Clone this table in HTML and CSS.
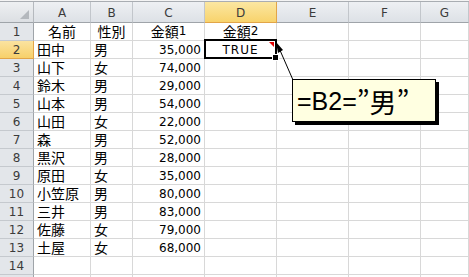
FILE: index.html
```html
<!DOCTYPE html>
<html lang="ja">
<head>
<meta charset="utf-8">
<link rel="stylesheet" href="styles.css">
</head>
<body>
<div class="wrap">
  <div class="sheet">
    <div class="corner"><span class="tri"></span></div>
    <div class="ch">A</div><div class="ch">B</div><div class="ch">C</div><div class="ch sel">D</div><div class="ch">E</div><div class="ch">F</div><div class="ch">G</div>

    <div class="rh">1</div><div class="c ctr j">名前</div><div class="c ctr j">性別</div><div class="c ctr j">金額<span class="n">1</span></div><div class="c ctr j">金額<span class="n">2</span></div><div class="c"></div><div class="c"></div><div class="c"></div>

    <div class="rh sel">2</div><div class="c j">田中</div><div class="c j">男</div><div class="c num">35,000</div><div class="c ctr n tr">TRUE</div><div class="c"></div><div class="c"></div><div class="c"></div>

    <div class="rh">3</div><div class="c j">山下</div><div class="c j">女</div><div class="c num">74,000</div><div class="c"></div><div class="c"></div><div class="c"></div><div class="c"></div>
    <div class="rh">4</div><div class="c j">鈴木</div><div class="c j">男</div><div class="c num">29,000</div><div class="c"></div><div class="c"></div><div class="c"></div><div class="c"></div>
    <div class="rh">5</div><div class="c j">山本</div><div class="c j">男</div><div class="c num">54,000</div><div class="c"></div><div class="c"></div><div class="c"></div><div class="c"></div>
    <div class="rh">6</div><div class="c j">山田</div><div class="c j">女</div><div class="c num">22,000</div><div class="c"></div><div class="c"></div><div class="c"></div><div class="c"></div>
    <div class="rh">7</div><div class="c j">森</div><div class="c j">男</div><div class="c num">52,000</div><div class="c"></div><div class="c"></div><div class="c"></div><div class="c"></div>
    <div class="rh">8</div><div class="c j">黒沢</div><div class="c j">男</div><div class="c num">28,000</div><div class="c"></div><div class="c"></div><div class="c"></div><div class="c"></div>
    <div class="rh">9</div><div class="c j">原田</div><div class="c j">女</div><div class="c num">35,000</div><div class="c"></div><div class="c"></div><div class="c"></div><div class="c"></div>
    <div class="rh">10</div><div class="c j">小笠原</div><div class="c j">男</div><div class="c num">80,000</div><div class="c"></div><div class="c"></div><div class="c"></div><div class="c"></div>
    <div class="rh">11</div><div class="c j">三井</div><div class="c j">男</div><div class="c num">83,000</div><div class="c"></div><div class="c"></div><div class="c"></div><div class="c"></div>
    <div class="rh">12</div><div class="c j">佐藤</div><div class="c j">女</div><div class="c num">79,000</div><div class="c"></div><div class="c"></div><div class="c"></div><div class="c"></div>
    <div class="rh">13</div><div class="c j">土屋</div><div class="c j">女</div><div class="c num">68,000</div><div class="c"></div><div class="c"></div><div class="c"></div><div class="c"></div>
    <div class="rh">14</div><div class="c"></div><div class="c"></div><div class="c"></div><div class="c"></div><div class="c"></div><div class="c"></div><div class="c"></div>
    <div class="rh last"></div><div class="c"></div><div class="c"></div><div class="c"></div><div class="c"></div><div class="c"></div><div class="c"></div><div class="c"></div>
  </div>

  <div class="selbox"><span class="redtri"></span></div>
  <div class="handle"></div>

  <svg class="arrow" width="469" height="277" viewBox="0 0 469 277">
    <line x1="279" y1="48" x2="293" y2="80" stroke="#000" stroke-width="1"/>
    <polygon points="276,42 283,50 278,53" fill="#000"/>
  </svg>

  <div class="note"><span class="f">=B2=</span><span class="fj">”男”</span></div>
</div>
</body>
</html>
```

FILE: styles.css
```css
html, body {
  margin: 0;
  padding: 0;
  background: #fff;
  overflow: hidden;
}

.wrap {
  position: relative;
  width: 469px;
  height: 277px;
  overflow: hidden;
  padding-top: 1px;
  box-sizing: border-box;
  background: #f4f4f4;
}

.sheet {
  display: grid;
  grid-template-columns: 34px 57px 42px 72px 72px 72px 72px 48px;
  grid-template-rows: 21px repeat(14, 18px) 3px;
  border-top: 1px solid #a9adb2;
  background: #fff;
  width: 469px;
}

.corner {
  position: relative;
  background: linear-gradient(#eef0f2, #dcdfe3);
  border-right: 1px solid #b5b9be;
  border-bottom: 1px solid #9fa4a9;
  box-sizing: border-box;
}

.tri {
  position: absolute;
  right: 4px;
  bottom: 3px;
  width: 0;
  height: 0;
  border-left: 9px solid transparent;
  border-bottom: 9px solid #b4b8bd;
}

.ch {
  box-sizing: border-box;
  background: linear-gradient(#eef0f3, #dde1e6);
  border-right: 1px solid #c2c6cb;
  border-bottom: 1px solid #9fa4a9;
  font-family: "DejaVu Sans", sans-serif;
  font-size: 12px;
  color: #3b3b3b;
  display: flex;
  align-items: center;
  justify-content: center;
  padding-top: 1px;
}

.ch:last-child {
  justify-content: flex-end;
  padding-right: 8px;
  border-right: 0;
}

.ch.sel {
  background: linear-gradient(#fbe7a2, #f8d36c);
  border-right: 1px solid #e2a548;
  border-bottom: 1px solid #e2a548;
}

.rh {
  box-sizing: border-box;
  background: #e3e6ea;
  border-right: 1px solid #9fa4a9;
  border-bottom: 1px solid #c5c9ce;
  font-family: "DejaVu Sans", sans-serif;
  font-size: 12px;
  color: #3b3b3b;
  display: flex;
  align-items: center;
  justify-content: center;
  padding-top: 1px;
}

.rh.last { border-bottom: 0; }

.rh.sel {
  background: linear-gradient(#fbe3a0, #f7d06a);
  border-bottom: 1px solid #e2a548;
  border-right: 1px solid #e2a548;
}

.c {
  box-sizing: border-box;
  border-right: 1px solid #d8d8d8;
  border-bottom: 1px solid #d8d8d8;
  display: flex;
  align-items: flex-end;
  padding: 0 3px 1px 3px;
  font-family: "DejaVu Sans", sans-serif;
  font-size: 12px;
  color: #000;
  line-height: 14px;
  white-space: nowrap;
}

.c.j {
  font-family: "Noto Sans CJK JP", sans-serif;
  font-size: 14px;
  font-weight: 400;
  line-height: 15px;
}

.c .n {
  font-family: "DejaVu Sans", sans-serif;
  font-size: 12px;
}

.ctr { justify-content: center; }
.num { justify-content: flex-end; padding-right: 3px; }

.tr {
  letter-spacing: 1px;
}

.selbox {
  position: absolute;
  left: 204px;
  top: 39px;
  width: 73px;
  height: 20px;
  border: 2px solid #000;
  box-sizing: border-box;
}

.redtri {
  position: absolute;
  right: 1px;
  top: 1px;
  width: 0;
  height: 0;
  border-left: 5px solid transparent;
  border-top: 5px solid #e00000;
}

.handle {
  position: absolute;
  left: 273px;
  top: 55px;
  width: 5px;
  height: 5px;
  background: #000;
  outline: 1px solid #fff;
}

.arrow {
  position: absolute;
  left: 0;
  top: 0;
}

.note {
  position: absolute;
  left: 292px;
  top: 79px;
  width: 144px;
  height: 43px;
  box-sizing: border-box;
  border: 1px solid #000;
  background: #ffffe1;
  box-shadow: 3px 3px 0 #000;
  display: flex;
  align-items: center;
  padding-left: 4px;
  padding-top: 2px;
  white-space: nowrap;
}

.note .f {
  font-family: "Liberation Sans", sans-serif;
  font-size: 25px;
}

.note .fj {
  font-family: "Noto Sans CJK JP", sans-serif;
  font-size: 27px;
}
```
